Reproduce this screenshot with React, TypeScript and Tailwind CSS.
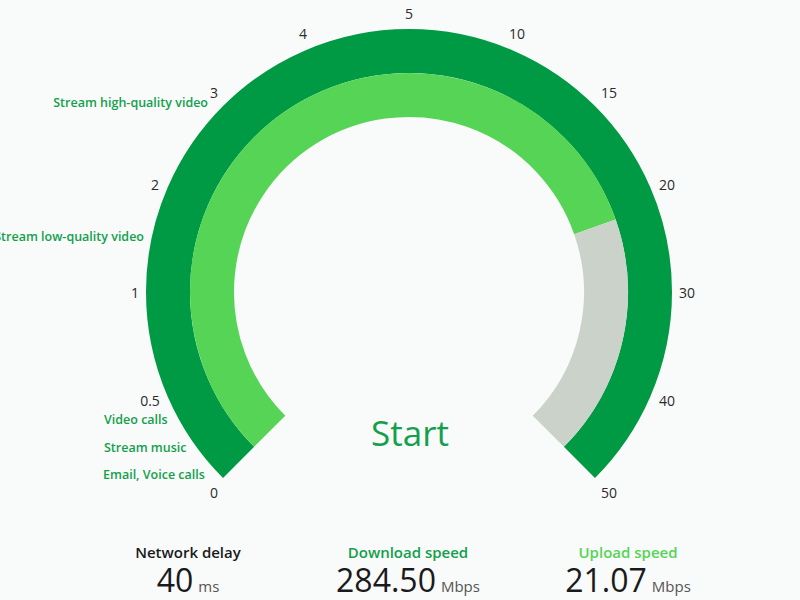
const CX = 409
const CY = 292

// scale labels, placed where the reference draws them around the dial
const TICKS: [string, number, number][] = [
  ['0', 214, 492],
  ['0.5', 150, 400],
  ['1', 135, 292],
  ['2', 155, 184],
  ['3', 214, 92],
  ['4', 303, 33],
  ['5', 409, 13],
  ['10', 517, 33],
  ['15', 609, 92],
  ['20', 667, 184],
  ['30', 687, 292],
  ['40', 667, 400],
  ['50', 609, 492],
]

// point on the gauge circle, angle in degrees clockwise from 12 o'clock
function pt(r: number, deg: number) {
  const a = (deg * Math.PI) / 180
  return { x: CX + r * Math.sin(a), y: CY - r * Math.cos(a) }
}

function arc(r: number, from: number, to: number) {
  const s = pt(r, from)
  const e = pt(r, to)
  const large = to - from > 180 ? 1 : 0
  return `M ${s.x} ${s.y} A ${r} ${r} 0 ${large} 1 ${e.x} ${e.y}`
}

const FILL_END = 70.7

function Gauge() {
  return (
    <div className="relative h-[542px] w-full">
      <svg width="800" height="542" className="absolute left-0 top-0">
        <path d={arc(241, -135, 135)} fill="none" stroke="#009a44" strokeWidth={44} />
        <path d={arc(197, -135, FILL_END)} fill="none" stroke="#56d456" strokeWidth={44} />
        <path d={arc(197, FILL_END, 135)} fill="none" stroke="#cad2ca" strokeWidth={44} />
        {TICKS.map(([t, x, y]) => (
          <text
            key={t}
            x={x}
            y={y}
            textAnchor="middle"
            dominantBaseline="central"
            fontSize={14}
            fill="#2b2b2b"
            style={{ fontFamily: '"Open Sans", sans-serif' }}
          >
            {t}
          </text>
        ))}
      </svg>

      {/* usage hints along the scale */}
      <div className="absolute right-[592px] top-[94px] whitespace-nowrap text-[12.5px] font-semibold text-[#12a04c]">
        Stream high-quality video
      </div>
      <div className="absolute right-[656px] top-[228px] whitespace-nowrap text-[12.5px] font-semibold text-[#12a04c]">
        Stream low-quality video
      </div>
      <div className="absolute left-[104px] top-[411px] whitespace-nowrap text-[12.5px] font-semibold text-[#12a04c]">
        Video calls
      </div>
      <div className="absolute left-[104px] top-[439px] whitespace-nowrap text-[12.5px] font-semibold text-[#12a04c]">
        Stream music
      </div>
      <div className="absolute left-[103px] top-[466px] whitespace-nowrap text-[12.5px] font-semibold text-[#12a04c]">
        Email, Voice calls
      </div>

      <button className="absolute left-[310px] top-[405px] w-[200px] text-center text-[35px] leading-[56px] text-[#12a04c]">
        Start
      </button>
    </div>
  )
}

function Stat({ title, color, value, unit }: { title: string; color: string; value: string; unit: string }) {
  return (
    <div className="flex w-[220px] flex-col items-center">
      <div className={`text-[15px] font-semibold leading-5 ${color}`}>{title}</div>
      <div className="flex items-baseline gap-[5px]">
        <span className="text-[32px] leading-[36px] text-[#1a1a1a]">{value}</span>
        <span className="text-[15px] text-[#555]">{unit}</span>
      </div>
    </div>
  )
}

export default function App() {
  return (
    <div className="h-[600px] w-[800px] overflow-hidden bg-[#f9fafa] font-['Open_Sans',sans-serif]">
      <Gauge />
      <div className="flex pl-[78px]">
        <Stat title="Network delay" color="text-[#1a1a1a]" value="40" unit="ms" />
        <Stat title="Download speed" color="text-[#12a04c]" value="284.50" unit="Mbps" />
        <Stat title="Upload speed" color="text-[#56d456]" value="21.07" unit="Mbps" />
      </div>
    </div>
  )
}
